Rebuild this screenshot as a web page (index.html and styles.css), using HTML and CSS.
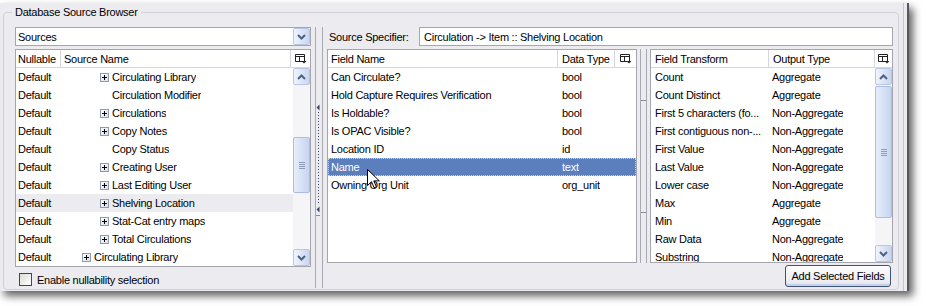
FILE: index.html
```html
<!DOCTYPE html>
<html>
<head>
<meta charset="utf-8">
<title>Database Source Browser</title>
<link rel="stylesheet" href="styles.css">
</head>
<body>
<div class="window">
  <div class="frame">
    <div class="groupbox">
      <div class="legend">Database Source Browser</div>
      <div class="main">
        <div class="leftcol">
          <div class="combo">
            <span class="combo-text">Sources</span>
            <span class="sbtn"><svg width="9" height="6" viewBox="0 0 9 6"><path d="M1 1l3.5 3.5L8 1" fill="none" stroke="#4d6185" stroke-width="2"/></svg></span>
          </div>
          <div class="table t-left">
            <div class="thead">
              <div class="th l-null">Nullable</div>
              <div class="th l-src">Source Name</div>
              <div class="th pick"><svg width="12" height="10" viewBox="0 0 12 10"><path d="M0.5 0.5h9v7h-9z M0.5 2.5h9 M4.5 2.5v5" fill="none" stroke="#222"/><path d="M6.5 7h5l-2.5 2.5z" fill="#222"/></svg></div>
            </div>
            <div class="tbody">
              <div class="rows">
                <div class="row"><span class="l-null">Default</span><span class="l-src lv2"><span class="plus"></span>Circulating Library</span></div>
                <div class="row"><span class="l-null">Default</span><span class="l-src lv2 leaf">Circulation Modifier</span></div>
                <div class="row"><span class="l-null">Default</span><span class="l-src lv2"><span class="plus"></span>Circulations</span></div>
                <div class="row"><span class="l-null">Default</span><span class="l-src lv2"><span class="plus"></span>Copy Notes</span></div>
                <div class="row"><span class="l-null">Default</span><span class="l-src lv2 leaf">Copy Status</span></div>
                <div class="row"><span class="l-null">Default</span><span class="l-src lv2"><span class="plus"></span>Creating User</span></div>
                <div class="row"><span class="l-null">Default</span><span class="l-src lv2"><span class="plus"></span>Last Editing User</span></div>
                <div class="row hover"><span class="l-null">Default</span><span class="l-src lv2"><span class="plus"></span>Shelving Location</span></div>
                <div class="row"><span class="l-null">Default</span><span class="l-src lv2"><span class="plus"></span>Stat-Cat entry maps</span></div>
                <div class="row"><span class="l-null">Default</span><span class="l-src lv2"><span class="plus"></span>Total Circulations</span></div>
                <div class="row"><span class="l-null">Default</span><span class="l-src lv1"><span class="plus"></span>Circulating Library</span></div>
              </div>
              <div class="vscroll">
                <span class="sbtn"><svg width="9" height="6" viewBox="0 0 9 6"><path d="M1 5l3.5-3.5L8 5" fill="none" stroke="#4d6185" stroke-width="2"/></svg></span>
                <div class="track"><div class="thumb thumb-left"><svg width="6" height="7" viewBox="0 0 6 7"><path d="M0 0.5h6M0 2.5h6M0 4.5h6M0 6.5h6" stroke="#8e9cba"/></svg></div></div>
                <span class="sbtn"><svg width="9" height="6" viewBox="0 0 9 6"><path d="M1 1l3.5 3.5L8 1" fill="none" stroke="#4d6185" stroke-width="2"/></svg></span>
              </div>
            </div>
          </div>
          <label class="check"><span class="box"></span>Enable nullability selection</label>
        </div>

        <div class="splitter">
          <div class="grip">
            <svg class="tri tri-top" width="4" height="7" viewBox="0 0 4 7"><path d="M3.5 0.5v6L0.5 3.5z" fill="#3b4562"/></svg>
            <div class="dots"></div>
            <svg class="tri" width="4" height="7" viewBox="0 0 4 7"><path d="M3.5 0.5v6L0.5 3.5z" fill="#3b4562"/></svg>
            <div class="dash"></div>
          </div>
        </div>

        <div class="rightarea">
          <div class="spec">
            <span class="spec-label">Source Specifier:</span>
            <div class="textbox">Circulation -&gt; Item :: Shelving Location</div>
          </div>
          <div class="lower">
            <div class="table t-mid">
              <div class="thead">
                <div class="th m-name">Field Name</div>
                <div class="th m-type">Data Type</div>
                <div class="th pick"><svg width="12" height="10" viewBox="0 0 12 10"><path d="M0.5 0.5h9v7h-9z M0.5 2.5h9 M4.5 2.5v5" fill="none" stroke="#222"/><path d="M6.5 7h5l-2.5 2.5z" fill="#222"/></svg></div>
              </div>
              <div class="tbody">
                <div class="rows">
                  <div class="row"><span class="m-name">Can Circulate?</span><span class="m-type">bool</span></div>
                  <div class="row"><span class="m-name">Hold Capture Requires Verification</span><span class="m-type">bool</span></div>
                  <div class="row"><span class="m-name">Is Holdable?</span><span class="m-type">bool</span></div>
                  <div class="row"><span class="m-name">Is OPAC Visible?</span><span class="m-type">bool</span></div>
                  <div class="row"><span class="m-name">Location ID</span><span class="m-type">id</span></div>
                  <div class="row selected"><span class="m-name">Name</span><span class="m-type">text</span></div>
                  <div class="row"><span class="m-name">Owning Org Unit</span><span class="m-type">org_unit</span></div>
                </div>
              </div>
            </div>

            <div class="splitter2">
              <div class="grip2">
                <div class="dash2 dash2-top"></div>
                <div class="dash2 dash2-bottom"></div>
              </div>
            </div>

            <div class="rightcol">
              <div class="table t-right">
                <div class="thead">
                  <div class="th r-name">Field Transform</div>
                  <div class="th r-type">Output Type</div>
                  <div class="th pick"><svg width="12" height="10" viewBox="0 0 12 10"><path d="M0.5 0.5h9v7h-9z M0.5 2.5h9 M4.5 2.5v5" fill="none" stroke="#222"/><path d="M6.5 7h5l-2.5 2.5z" fill="#222"/></svg></div>
                </div>
                <div class="tbody">
                  <div class="rows">
                    <div class="row"><span class="r-name">Count</span><span class="r-type">Aggregate</span></div>
                    <div class="row"><span class="r-name">Count Distinct</span><span class="r-type">Aggregate</span></div>
                    <div class="row"><span class="r-name">First 5 characters (fo...</span><span class="r-type">Non-Aggregate</span></div>
                    <div class="row"><span class="r-name">First contiguous non-...</span><span class="r-type">Non-Aggregate</span></div>
                    <div class="row"><span class="r-name">First Value</span><span class="r-type">Non-Aggregate</span></div>
                    <div class="row"><span class="r-name">Last Value</span><span class="r-type">Non-Aggregate</span></div>
                    <div class="row"><span class="r-name">Lower case</span><span class="r-type">Non-Aggregate</span></div>
                    <div class="row"><span class="r-name">Max</span><span class="r-type">Aggregate</span></div>
                    <div class="row"><span class="r-name">Min</span><span class="r-type">Aggregate</span></div>
                    <div class="row"><span class="r-name">Raw Data</span><span class="r-type">Non-Aggregate</span></div>
                    <div class="row"><span class="r-name">Substring</span><span class="r-type">Non-Aggregate</span></div>
                  </div>
                  <div class="vscroll">
                    <span class="sbtn"><svg width="9" height="6" viewBox="0 0 9 6"><path d="M1 5l3.5-3.5L8 5" fill="none" stroke="#4d6185" stroke-width="2"/></svg></span>
                    <div class="track"><div class="thumb thumb-right"><svg width="6" height="7" viewBox="0 0 6 7"><path d="M0 0.5h6M0 2.5h6M0 4.5h6M0 6.5h6" stroke="#8e9cba"/></svg></div></div>
                    <span class="sbtn"><svg width="9" height="6" viewBox="0 0 9 6"><path d="M1 1l3.5 3.5L8 1" fill="none" stroke="#4d6185" stroke-width="2"/></svg></span>
                  </div>
                </div>
              </div>
              <div class="btnrow"><button class="btn">Add Selected Fields</button></div>
            </div>
          </div>
        </div>
      </div>
    </div>
  </div>
</div>
<svg class="cursor" width="13" height="20" viewBox="0 0 13 20"><path d="M0.5 0.5v16l4-3.8 2.6 6 2.3-1-2.6-5.8h5.6z" fill="#fff" stroke="#000" stroke-linejoin="miter"/></svg>
</body>
</html>
```

FILE: styles.css
```css
* { box-sizing: border-box; }
html, body { margin: 0; padding: 0; background: #fff; }
body {
  font-family: "Liberation Sans", Arial, sans-serif;
  font-size: 11px;
  letter-spacing: -0.25px;
  color: #000;
  width: 933px;
  height: 306px;
  overflow: hidden;
  position: relative;
}
svg { display: block; }

.window {
  margin-top: 3px;
  width: 909px;
  height: 288px;
  background: #ecebef;
  border-right: 2px solid #56565c;
  box-shadow: 4px 5px 8px rgba(0, 0, 0, 0.62);
}
.frame {
  width: 904px;
  height: 100%;
  border-right: 1px solid #c6c6cc;
  padding-top: 9px;
  padding-left: 3px;
}
.groupbox {
  width: 896px;
  height: 278px;
  border: 1px solid #d0d0d6;
  border-radius: 4px;
}
.legend {
  width: max-content;
  margin: -7px 0 0 8px;
  padding: 0 3px;
  line-height: 13px;
  background: #ecebef;
}
.main {
  display: flex;
  margin-top: 8px;
  padding-left: 11px;
  height: 261px;
}

/* left column */
.leftcol { width: 296px; display: flex; flex-direction: column; }
.combo {
  height: 19px;
  border: 1px solid #a5a5ad;
  background: #fff;
  display: flex;
  align-items: center;
}
.combo-text { flex: 1; padding-left: 2px; }

.sbtn {
  width: 17px;
  height: 17px;
  flex: none;
  border: 1px solid #b9c7e4;
  border-radius: 2px;
  background: linear-gradient(90deg, #f0f4fc, #c8d6f1);
  display: flex;
  align-items: center;
  justify-content: center;
}

.table {
  border: 1px solid #a5a5ad;
  background: #fff;
  display: flex;
  flex-direction: column;
  overflow: hidden;
}
.thead {
  height: 18px;
  flex: none;
  display: flex;
  border-bottom: 1px solid #d6d6dc;
}
.th {
  display: flex;
  align-items: center;
  border-right: 1px solid #d6d6dc;
  white-space: nowrap;
  flex: none;
}
.th.pick { border-right: none; flex: 1; justify-content: center; padding-top: 1px; }
.tbody { flex: 1; display: flex; min-height: 0; }
.rows { flex: 1; overflow: hidden; }
.row {
  height: 18px;
  display: flex;
  align-items: center;
  white-space: nowrap;
}
.row > span { flex: none; overflow: hidden; }
.row.hover { background: #ececf0; }
.row.selected {
  background: #5b7ebd;
  color: #fff;
  outline: 1px dotted #e2d58e;
  outline-offset: -1px;
}

.t-left { margin-top: 3px; height: 218px; }
.l-null { width: 45px; padding-left: 2px; }
.th.l-src { width: 230px; padding-left: 3px; }
.row .l-src { display: flex; align-items: center; }
.lv2 { padding-left: 39px; }
.lv2.leaf { padding-left: 51px; }
.lv1 { padding-left: 21px; }
.plus {
  width: 9px;
  height: 9px;
  margin-right: 3px;
  border: 1px solid #8c9bb6;
  background:
    linear-gradient(#000, #000) center / 5px 1px no-repeat,
    linear-gradient(#000, #000) center / 1px 5px no-repeat,
    linear-gradient(135deg, #ffffff, #dcdce4);
}

.vscroll {
  width: 17px;
  flex: none;
  display: flex;
  flex-direction: column;
  background: #f5f5f8;
}
.track { flex: 1; }
.thumb {
  border: 1px solid #adbde0;
  border-radius: 2px;
  background: linear-gradient(90deg, #e6eefa, #c6d5f1);
  display: flex;
  align-items: center;
  justify-content: center;
}
.thumb-left { margin-top: 52px; height: 56px; }
.thumb-right { margin-top: 1px; height: 132px; }

.check {
  display: flex;
  align-items: center;
  height: 13px;
  margin: 6px 0 0 4px;
}
.box {
  width: 13px;
  height: 13px;
  margin-right: 5px;
  border: 1px solid #1d5081;
  background: linear-gradient(135deg, #dcdcd8, #ffffff);
}

/* splitter between left and right */
.splitter { width: 16px; flex: none; display: flex; }
.grip {
  margin-left: 4px;
  width: 8px;
  border-left: 1px solid #a9a9b1;
  border-right: 1px solid #a9a9b1;
  display: flex;
  flex-direction: column;
  align-items: flex-start;
}
.tri-top { margin-top: 77px; }
.dots {
  margin: 1px 0 1px 2px;
  width: 1px;
  height: 93px;
  background: repeating-linear-gradient(#3b4562 0 1px, transparent 1px 3px);
}
.dash {
  margin-top: 2px;
  width: 4px;
  height: 1px;
  background: #8a8a92;
}

/* right area */
.rightarea { width: 566px; flex: none; display: flex; flex-direction: column; }
.spec { height: 19px; display: flex; align-items: center; flex: none; }
.spec-label { width: 92px; padding-left: 2px; white-space: nowrap; }
.textbox {
  flex: 1;
  height: 19px;
  border: 1px solid #a5a5ad;
  background: #fff;
  display: flex;
  align-items: center;
  padding-left: 4px;
  white-space: nowrap;
}
.lower { display: flex; margin-top: 3px; flex: 1; }

.t-mid { width: 310px; height: 214px; flex: none; }
.m-name { width: 230px; padding-left: 3px; }
.m-type { padding-left: 4px; }
.th.m-type { width: 57px; }

.splitter2 { width: 13px; flex: none; }
.grip2 {
  margin-left: 3px;
  width: 7px;
  height: 214px;
  border-left: 1px solid #a9a9b1;
  border-right: 1px solid #a9a9b1;
  display: flex;
  flex-direction: column;
}
.dash2 { width: 5px; height: 1px; background: #8a8a92; }
.dash2-top { margin-top: 51px; }
.dash2-bottom { margin-top: 111px; }

.rightcol { width: 243px; flex: none; display: flex; flex-direction: column; }
.t-right { height: 214px; flex: none; }
.r-name { width: 118px; padding-left: 4px; }
.th.r-type { width: 106px; padding-left: 4px; }
.row .r-type { padding-left: 3px; }

.btnrow {
  display: flex;
  justify-content: flex-end;
  margin-top: 2px;
  padding-right: 2px;
}
.btn {
  width: 106px;
  height: 22px;
  padding: 0;
  font: inherit;
  letter-spacing: inherit;
  color: #000;
  border: 1px solid #3f5277;
  border-radius: 3px;
  background: linear-gradient(#fdfdfe, #ecebf1 80%, #d9dae6);
  box-shadow: inset 0 -2px 0 #c6d1ec, inset 0 1px 0 #fff;
}

.cursor { position: absolute; left: 367px; top: 169px; }
```
